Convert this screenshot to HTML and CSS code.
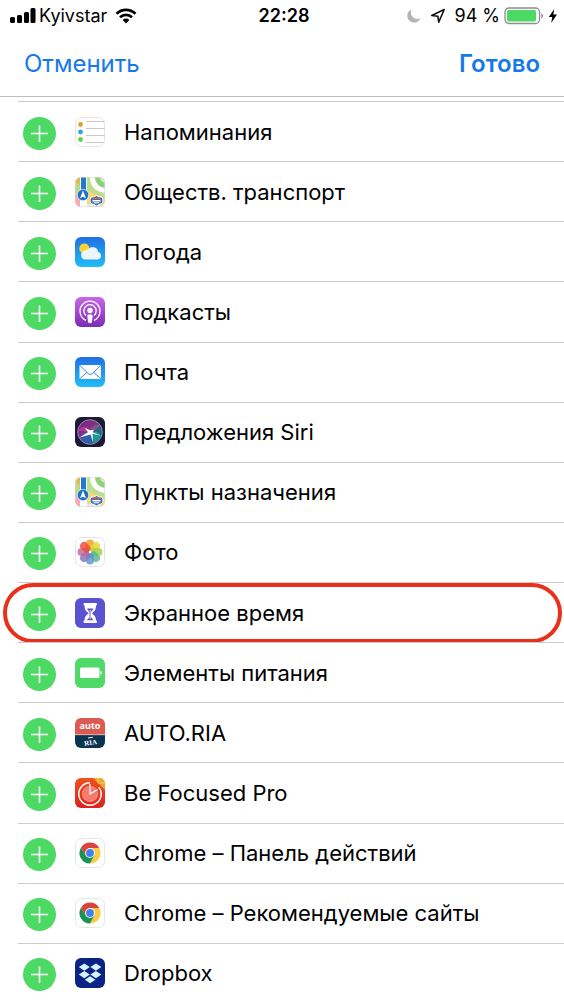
FILE: index.html
```html
<!DOCTYPE html>
<html lang="ru">
<head>
<meta charset="utf-8">
<meta name="viewport" content="width=device-width, initial-scale=1">
<title>Виджеты</title>
<link rel="stylesheet" href="styles.css">
</head>
<body>
<svg class="sprite" aria-hidden="true">
  <defs>
    <linearGradient id="g-blue" x1="0" y1="0" x2="0" y2="1"><stop offset="0" stop-color="#2170e4"/><stop offset="1" stop-color="#21bdf7"/></linearGradient>
    <linearGradient id="g-purple" x1="0" y1="0" x2="0" y2="1"><stop offset="0" stop-color="#c766e6"/><stop offset="1" stop-color="#7c2bb8"/></linearGradient>
    <linearGradient id="g-red" x1="0" y1="0" x2="0" y2="1"><stop offset="0" stop-color="#f0501f"/><stop offset="1" stop-color="#d9241c"/></linearGradient>
    <linearGradient id="g-siri" x1="0" y1="0" x2="1" y2="1"><stop offset="0" stop-color="#4b2b8f"/><stop offset=".35" stop-color="#8a2a80"/><stop offset=".6" stop-color="#1f6f7d"/><stop offset="1" stop-color="#173b77"/></linearGradient>
    <clipPath id="tile"><rect width="30" height="30" rx="6"/></clipPath>
    <symbol id="plus" viewBox="0 0 33 33"><path d="M16.500 8.500v16.500M8 16.500h17" stroke="#fff" stroke-width="1.600" fill="none"/></symbol>
    <symbol id="maps" viewBox="0 0 30 30">
      <g clip-path="url(#tile)">
        <rect width="30" height="30" fill="#f5efe2"/>
        <path d="M0 0h6v13L0 17z" fill="#e9b649"/><path d="M0 4l6 5v8H0z" fill="#bcd98b"/>
        <path d="M0 17h8l7 13H0z" fill="#f4a9b4"/>
        <path d="M11 0h4c0 9 5 14 15 16v7L11 13z" fill="#b9df8f"/>
        <path d="M15 0c0 9 5 14 15 16V0z" fill="#fff"/>
        <path d="M20 0c0 6 4 10 10 11V0z" fill="#8ed17b"/><path d="M25 0c0 3 2 5 5 6V0z" fill="#e1edc9"/>
        <path d="M11 13l19 9v8H12z" fill="#f6d774"/>
        <path d="M12 27h10l8 3H12z" fill="#e8e6e0"/>
        <path d="M5 0h7v30H5z" fill="#fff"/><path d="M6 0h5v19H6z" fill="#2379d2"/>
        <circle cx="8" cy="18" r="5.700" fill="#1c71cb" stroke="#fff" stroke-width=".6"/>
        <path d="M8 13.500l3 7.800-3-1.600-3 1.600z" fill="#fff"/>
        <path d="M16 20q2.500 1 5.500-1.500Q24.500 21 27 20q2.500 5-1 7-2.500.5-4.500 2-2-1.500-4.500-2-3.500-2-1-7z" fill="#3e77b9" stroke="#fff" stroke-width="1"/>
        <path d="M17.500 20.600h8.200v1.500h-8.200z" fill="#e0524c"/><path d="M17.500 23h8v1.500h-8zM18.800 25.300h5.400v1h-5.400z" fill="#fff"/>
      </g>
      <rect x=".5" y=".5" width="29" height="29" rx="5.500" fill="none" stroke="#d8d8d4" stroke-opacity=".6"/>
    </symbol>
    <symbol id="chrome" viewBox="0 0 30 30">
      <rect x=".5" y=".5" width="29" height="29" rx="6" fill="#fff" stroke="#e3e8e3"/>
      <path d="M15 15L5.900 9.700A10.500 10.500 0 0 1 24.100 9.700z" fill="#d9453a"/>
      <path d="M15 10h9.300A10.500 10.500 0 0 1 15 25.500l4.300-8z" fill="#fccb45"/>
      <path d="M5.900 9.700A10.500 10.500 0 0 0 15 25.500l4.400-8L15 15l-4.400 2.500z" fill="#1a9253"/>
      <path d="M15 10H6l4.600 7.500z" fill="#d9453a"/><path d="M5.900 9.700l4.700 8.100L9 19z" fill="#1a9253"/>
      <circle cx="15" cy="15" r="4.900" fill="#f3f6fb"/><circle cx="15" cy="15" r="3.900" fill="#3f82ee"/>
    </symbol>
  </defs>
</svg>

<header class="top">
  <div class="status">
    <div class="status-left">
      <svg class="signal" viewBox="0 0 26 16"><rect x="0" y="9" width="5" height="6" rx="1.500"/><rect x="7" y="7" width="5" height="8" rx="1.500"/><rect x="14" y="4" width="5" height="11" rx="1.500"/><rect x="20.500" y="0" width="5" height="15" rx="1.500"/></svg>
      <span>Kyivstar</span>
      <svg class="wifi" viewBox="0 0 22 16"><g fill="none" stroke="#000" stroke-width="2.700"><path d="M1.500 5.700a13.500 13.500 0 0 1 19 0"/><path d="M5 9.300a8.500 8.500 0 0 1 12 0"/></g><path d="M11 15.500l-3.400-3.600a4.900 4.900 0 0 1 6.800 0z"/></svg>
    </div>
    <time class="clock">22:28</time>
    <div class="status-right">
      <svg class="moon" viewBox="0 0 14 14"><path d="M4.500.5A6.800 6.800 0 1 0 13.500 9 6.500 6.500 0 0 1 4.500.5z" fill="#b4b4b6"/></svg>
      <svg class="locate" viewBox="0 0 16 16"><path d="M14.200 1.500L1.700 7.500l6.200.7.800 6z" fill="none" stroke="#111" stroke-width="1.600" stroke-linejoin="round"/></svg>
      <span>94 %</span>
      <svg class="battery" viewBox="0 0 40 18"><rect x="1" y="1" width="34.500" height="15.500" rx="4" fill="#fff" stroke="#8e8e93" stroke-width="1.300"/><rect x="3" y="3" width="29" height="11.500" rx="1.500" fill="#4cd964"/><path d="M37.300 6.200q1.700.8 1.700 2.700t-1.700 2.700z" fill="#8e8e93"/></svg>
      <svg class="bolt" viewBox="0 0 10 16"><path d="M6.200 1L.8 9h3.500L3.200 15 9 6.500H5.400z"/></svg>
    </div>
  </div>
  <nav class="nav">
    <button class="nav-button" type="button">Отменить</button>
    <button class="nav-button nav-done" type="button">Готово</button>
  </nav>
</header>

<main class="content">
<ul class="list">
  <li class="row"><button class="add" type="button" aria-label="Добавить Напоминания"><svg viewBox="0 0 33 33"><use href="#plus"/></svg></button>
    <svg class="icon" viewBox="0 0 30 30"><rect x=".5" y=".5" width="29" height="29" rx="6" fill="#fff" stroke="#e4e4e4"/><path d="M11 4.500h18.500M11 11.500h18.500M11 18.500h18.500M11 25.500h17.500" stroke="#bcbcbc" stroke-width=".8"/><circle cx="5.500" cy="7.500" r="2.400" fill="#e99b23"/><circle cx="5.500" cy="15" r="2.400" fill="#35a3e0"/><circle cx="5.500" cy="22.500" r="2.400" fill="#66cf4b"/></svg>
    <span class="name">Напоминания</span></li>
  <li class="row"><button class="add" type="button" aria-label="Добавить Обществ. транспорт"><svg viewBox="0 0 33 33"><use href="#plus"/></svg></button>
    <svg class="icon" viewBox="0 0 30 30"><use href="#maps"/></svg>
    <span class="name">Обществ. транспорт</span></li>
  <li class="row"><button class="add" type="button" aria-label="Добавить Погода"><svg viewBox="0 0 33 33"><use href="#plus"/></svg></button>
    <svg class="icon" viewBox="0 0 30 30"><rect width="30" height="30" rx="6" fill="url(#g-blue)"/><circle cx="9.300" cy="11.500" r="5" fill="#ffd12e"/><path d="M10.500 22.500a4.400 4.400 0 0 1-.9-8.700 4 4 0 0 1 3.300-1 5.600 5.600 0 0 1 10.300 2.100 3.900 3.900 0 0 1-.4 7.600z" fill="#edf6fc"/></svg>
    <span class="name">Погода</span></li>
  <li class="row"><button class="add" type="button" aria-label="Добавить Подкасты"><svg viewBox="0 0 33 33"><use href="#plus"/></svg></button>
    <svg class="icon" viewBox="0 0 30 30"><rect width="30" height="30" rx="6" fill="url(#g-purple)"/><g fill="none" stroke="#fff" stroke-width="1.300"><path d="M11 23.300a10 10 0 1 1 8 0"/><path d="M11 18.600a6.200 6.200 0 1 1 8 0"/></g><circle cx="15" cy="13.500" r="2.700" fill="#fff"/><path d="M12.300 18.800q.1-1.600 2.700-1.600t2.700 1.600l-.8 6.200q-.2 1.300-1.900 1.300T13.100 25z" fill="#fff"/></svg>
    <span class="name">Подкасты</span></li>
  <li class="row"><button class="add" type="button" aria-label="Добавить Почта"><svg viewBox="0 0 33 33"><use href="#plus"/></svg></button>
    <svg class="icon" viewBox="0 0 30 30"><rect width="30" height="30" rx="6" fill="url(#g-blue)"/><rect x="4.500" y="8" width="21.500" height="14" rx="1.200" fill="#fff"/><path d="M5 8.500l8.300 8.200q1.900 1.700 3.800 0L25.500 8.500M5 21.600l7-6.400M25.500 21.600l-7-6.400" fill="none" stroke="#3188df" stroke-width="1"/></svg>
    <span class="name">Почта</span></li>
  <li class="row"><button class="add" type="button" aria-label="Добавить Предложения Siri"><svg viewBox="0 0 33 33"><use href="#plus"/></svg></button>
    <svg class="icon" viewBox="0 0 30 30"><rect width="30" height="30" rx="6" fill="#1c1a35"/><circle cx="15" cy="15" r="12.300" fill="url(#g-siri)" stroke="#a99dc9" stroke-width=".8"/><path d="M3 14q5-8 12-1 6-8 10-4l-8 6z" fill="#d6409a" opacity=".6"/><path d="M16 15q9-1 10 4-2 6-8 7z" fill="#29b1a5" opacity=".65"/><path d="M5 21Q8 14 14 15l3 11q-7 1-12-5z" fill="#345bc5" opacity=".7"/><path d="M10 11l5 2.300 4-.3-1.500 2.200 8.300 3.300-8.300-1.700.5 8.700-2.500-8L4.500 20.500l8.500-5.300z" fill="#fff"/></svg>
    <span class="name">Предложения Siri</span></li>
  <li class="row"><button class="add" type="button" aria-label="Добавить Пункты назначения"><svg viewBox="0 0 33 33"><use href="#plus"/></svg></button>
    <svg class="icon" viewBox="0 0 30 30"><use href="#maps"/></svg>
    <span class="name">Пункты назначения</span></li>
  <li class="row"><button class="add" type="button" aria-label="Добавить Фото"><svg viewBox="0 0 33 33"><use href="#plus"/></svg></button>
    <svg class="icon" viewBox="0 0 30 30"><rect x=".5" y=".5" width="29" height="29" rx="6" fill="#fff" stroke="#e4e4e4"/><g class="petals"><rect x="11" y="2.500" width="8" height="11.500" rx="4" fill="#f59b21"/><rect x="11" y="2.500" width="8" height="11.500" rx="4" fill="#e3dc2d" transform="rotate(45 15 15)"/><rect x="11" y="2.500" width="8" height="11.500" rx="4" fill="#a5cf4a" transform="rotate(90 15 15)"/><rect x="11" y="2.500" width="8" height="11.500" rx="4" fill="#58b78d" transform="rotate(135 15 15)"/><rect x="11" y="2.500" width="8" height="11.500" rx="4" fill="#5c97d0" transform="rotate(180 15 15)"/><rect x="11" y="2.500" width="8" height="11.500" rx="4" fill="#8573b6" transform="rotate(225 15 15)"/><rect x="11" y="2.500" width="8" height="11.500" rx="4" fill="#c067a0" transform="rotate(270 15 15)"/><rect x="11" y="2.500" width="8" height="11.500" rx="4" fill="#ea4939" transform="rotate(315 15 15)"/></g><circle cx="15" cy="15" r="1.200" fill="#fff"/></svg>
    <span class="name">Фото</span></li>
  <li class="row row-marked"><button class="add" type="button" aria-label="Добавить Экранное время"><svg viewBox="0 0 33 33"><use href="#plus"/></svg></button>
    <svg class="icon" viewBox="0 0 30 30"><rect width="30" height="30" rx="6" fill="#5a53cf"/><path d="M9.500 5h11.500q1 0 1 1.200T21 7.500c0 4-1.500 6-4.200 7.700C19.500 17 21 18.800 21 22.500q1 0 1 1.200T21 25H9.500q-1 0-1-1.200t1-1.300c0-3.700 1.500-5.500 4.200-7.300C11 13.500 9.500 11.500 9.500 7.500q-1 0-1-1.300T9.500 5z" fill="#fff"/><path d="M12 10.500h6.500l-2.500 3.700v5l2.700 3h-7l2.700-3v-5z" fill="#5a53cf"/><path d="M15.200 12v9" stroke="#fff" stroke-width=".8"/></svg>
    <span class="name">Экранное время</span></li>
  <li class="row"><button class="add" type="button" aria-label="Добавить Элементы питания"><svg viewBox="0 0 33 33"><use href="#plus"/></svg></button>
    <svg class="icon" viewBox="0 0 30 30"><rect width="30" height="30" rx="6" fill="#4fd966"/><rect x="5" y="9.500" width="19.500" height="10.500" rx="1.500" fill="#fff"/><path d="M25.500 12.800q1.500.6 1.500 2t-1.500 2z" fill="#fff"/></svg>
    <span class="name">Элементы питания</span></li>
  <li class="row"><button class="add" type="button" aria-label="Добавить AUTO.RIA"><svg viewBox="0 0 33 33"><use href="#plus"/></svg></button>
    <svg class="icon" viewBox="0 0 30 30"><g clip-path="url(#tile)"><rect width="30" height="17" fill="#db5b53"/><rect y="17" width="30" height="13" fill="#083450"/><path d="M0 16.700h30" stroke="#f3dedd" stroke-width=".7"/></g><text class="logo-auto" x="15" y="11">auto</text><text class="logo-ria" x="15.500" y="27" transform="rotate(-8 15 24)">RIA</text><path d="M13 20l5-.8" stroke="#fff" stroke-width="1"/></svg>
    <span class="name">AUTO.RIA</span></li>
  <li class="row"><button class="add" type="button" aria-label="Добавить Be Focused Pro"><svg viewBox="0 0 33 33"><use href="#plus"/></svg></button>
    <svg class="icon" viewBox="0 0 30 30"><g clip-path="url(#tile)"><rect width="30" height="30" fill="url(#g-red)"/><path d="M18 0h12v12z" fill="#f2a52b"/><path d="M23 0v5h7" fill="none" stroke="#f8d25a" stroke-width="1"/></g><circle cx="15" cy="16" r="8.300" fill="#f77c70"/><path d="M15 4.800a11.200 11.200 0 1 0 8.800 4.300" fill="none" stroke="#fff" stroke-width="1.500"/><path d="M15 6v10l7.800-4.600" fill="none" stroke="#fff" stroke-width="1.200"/></svg>
    <span class="name">Be Focused Pro</span></li>
  <li class="row"><button class="add" type="button" aria-label="Добавить Chrome – Панель действий"><svg viewBox="0 0 33 33"><use href="#plus"/></svg></button>
    <svg class="icon" viewBox="0 0 30 30"><use href="#chrome"/></svg>
    <span class="name">Chrome – Панель действий</span></li>
  <li class="row"><button class="add" type="button" aria-label="Добавить Chrome – Рекомендуемые сайты"><svg viewBox="0 0 33 33"><use href="#plus"/></svg></button>
    <svg class="icon" viewBox="0 0 30 30"><use href="#chrome"/></svg>
    <span class="name">Chrome – Рекомендуемые сайты</span></li>
  <li class="row"><button class="add" type="button" aria-label="Добавить Dropbox"><svg viewBox="0 0 33 33"><use href="#plus"/></svg></button>
    <svg class="icon" viewBox="0 0 30 30"><rect width="30" height="30" rx="6" fill="#0b2385"/><g fill="#d5f4ff"><path d="M9.300 5.500l5.500 3.600-5.500 3.600-5.500-3.600z"/><path d="M20.900 5.500l5.500 3.600-5.500 3.600-5.500-3.600z"/><path d="M9.300 13l5.500 3.600-5.500 3.600-5.500-3.600z"/><path d="M20.900 13l5.500 3.600-5.500 3.600-5.500-3.600z"/><path d="M15.100 18.200l5.300 3.500-5.300 3.500-5.300-3.500z"/></g></svg>
    <span class="name">Dropbox</span></li>
</ul>
</main>
</body>
</html>
```
FILE: styles.css
```css
* { box-sizing: border-box; }

body {
  margin: 0;
  min-height: 100vh;
  display: flex;
  flex-direction: column;
  background: #fff;
  color: #000;
  font-family: Inter, "Liberation Sans", sans-serif;
}

svg { display: block; flex: none; }
.sprite { position: absolute; width: 0; height: 0; }

button {
  border: 0;
  padding: 0;
  background: none;
  font: inherit;
  cursor: pointer;
}

.top { border-bottom: 1px solid #bfbfc2; }

.status {
  display: grid;
  grid-template-columns: 1fr auto 1fr;
  align-items: center;
  height: 32px;
  padding: 0 6px 0 10px;
  font-size: 18px;
  line-height: 22px;
}
.status-left, .status-right { display: flex; align-items: center; white-space: nowrap; }
.status-left { gap: 3px; }
.status-right { justify-content: flex-end; gap: 4px; }
.clock { font-weight: 600; }

.signal { width: 26px; height: 16px; }
.wifi { width: 22px; height: 16px; margin-left: 5px; }
.moon { width: 14px; height: 14px; margin-right: 5px; }
.locate { width: 16px; height: 16px; margin-right: 4px; }
.battery { width: 40px; height: 18px; }
.bolt { width: 10px; height: 16px; }

.nav {
  display: flex;
  justify-content: space-between;
  align-items: center;
  height: 64px;
  padding: 0 24px;
  font-size: 24px;
  line-height: 30px;
}
.nav-button { color: #1778ea; }
.nav-done { font-weight: 600; }

.content {
  flex: 1;
  display: flex;
  flex-direction: column;
  padding: 4px 0 0 18px;
}

.list {
  flex: 1;
  display: grid;
  grid-auto-rows: 1fr;
  margin: 0;
  padding: 0;
  list-style: none;
}

.row {
  position: relative;
  display: flex;
  align-items: center;
  min-height: 60px;
  padding-left: 5px;
  border-top: 1px solid #cbcbcd;
  font-size: 22px;
  line-height: 28px;
}

.add {
  flex: none;
  width: 33px;
  height: 33px;
  margin-top: 3px;
  border-radius: 50%;
  background: #4cd964;
}

.icon { width: 30px; height: 30px; margin: 0 19px; }

.row-marked::after {
  content: "";
  position: absolute;
  inset: 0 2px -1px -15px;
  border: 4px solid #e8301a;
  border-radius: 30px;
  pointer-events: none;
}

.petals rect { opacity: .82; }

.logo-auto {
  fill: #fff;
  font: 700 9px "Open Sans", sans-serif;
  text-anchor: middle;
}
.logo-ria {
  fill: #fff;
  font: 700 7px "Liberation Serif", serif;
  text-anchor: middle;
}
```
